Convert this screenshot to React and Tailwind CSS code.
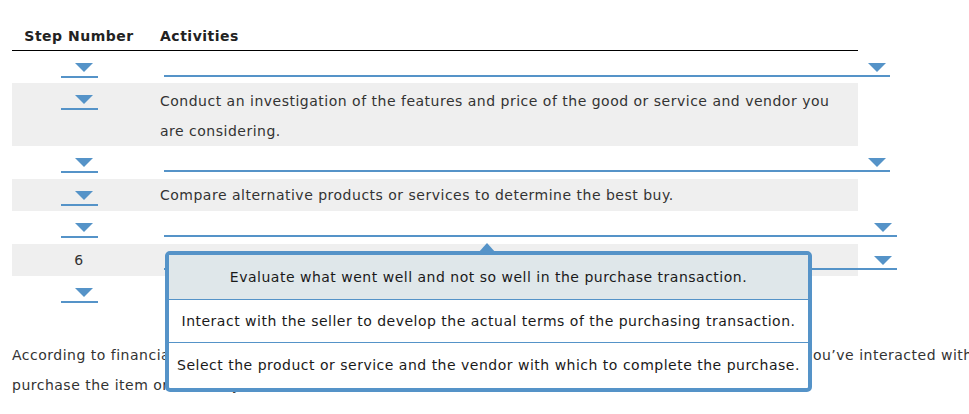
import React from 'react'

const BLUE = 'border-[#5593c8]'

function Caret({ className = '' }) {
  return (
    <svg width="18" height="9" viewBox="0 0 18 9" className={className}>
      <path d="M0 0 H18 L9 9 Z" fill="#5593c8" />
    </svg>
  )
}

// ── step number dropdown (narrow, centred in the first column) ──
function StepSelect() {
  return (
    <div className={`mt-[12px] h-[15px] w-[37px] border-b-2 ${BLUE} flex justify-end pr-[5px]`}>
      <Caret />
    </div>
  )
}

// ── activity dropdown (wide, runs past the table edge) ──
function ActivitySelect({ width = 'w-[726px]', pr = 'pr-[4px]' }) {
  return (
    <div className={`mt-[12px] ml-[4px] h-[14px] ${width} border-b-2 ${BLUE} flex justify-end ${pr} shrink-0`}>
      <Caret />
    </div>
  )
}

function Row({ gray, height, step, children }) {
  return (
    <div className={`flex ${height} ${gray ? 'bg-[#efefef]' : ''}`}>
      <div className="w-[134px] shrink-0 flex justify-center">{step}</div>
      <div className="flex-1 pl-[14px] flex items-start">{children}</div>
    </div>
  )
}

export default function App() {
  return (
    <div className="relative w-[969px] h-[414px] overflow-hidden bg-white text-[14px] tracking-[0.5px] text-[#333] font-['DejaVu_Sans','Verdana',sans-serif]">
      <div className="pl-3 pt-[22px]">
        <div className="w-[846px]">
          {/* header */}
          <div className="flex h-[29px] border-b border-black items-center font-bold text-[#222]">
            <div className="w-[134px] text-center">Step Number</div>
            <div className="pl-[14px]">Activities</div>
          </div>

          <Row height="h-[32px]" step={<StepSelect />}>
            <ActivitySelect />
          </Row>

          <Row gray height="h-[63px]" step={<StepSelect />}>
            <p className="pt-[3px] leading-[30px]">
              Conduct an investigation of the features and price of the good or service and vendor you
              <br />
              are considering.
            </p>
          </Row>

          <Row height="h-[33px]" step={<StepSelect />}>
            <ActivitySelect />
          </Row>

          <Row gray height="h-[32px]" step={<StepSelect />}>
            <p className="leading-[32px]">Compare alternative products or services to determine the best buy.</p>
          </Row>

          <Row height="h-[33px]" step={<StepSelect />}>
            <ActivitySelect width="w-[733px]" pr="pr-[5px]" />
          </Row>

          <Row gray height="h-[32px]" step={<div className="leading-[32px]">6</div>}>
            <ActivitySelect width="w-[733px]" pr="pr-[5px]" />
          </Row>

          <Row height="h-[33px]" step={<StepSelect />} />
        </div>

        {/* paragraph, partly hidden behind the open list */}
        <p className="mt-[31px] leading-[30px] whitespace-nowrap">
          According to financial advisers, it is wise to pause and think things over carefully for a day or three after you’ve interacted with the seller
          <br />
          purchase the item or service you have chosen.
        </p>
      </div>

      {/* ── open dropdown list ── */}
      <div className="absolute left-[165px] top-[251px] w-[647px] h-[141px]">
        <svg width="18" height="10" viewBox="0 0 18 10" className="absolute left-[313px] -top-[8px]">
          <path d="M0 10 L9 0 L18 10 Z" fill="#5593c8" />
        </svg>
        <div className="h-full border-4 border-[#5593c8] rounded-[5px] bg-white text-[#1a1a1a] flex flex-col overflow-hidden">
          <div className="h-[45px] bg-[#dfe7ea] flex items-center justify-center border-b border-[#5593c8]">
            Evaluate what went well and not so well in the purchase transaction.
          </div>
          <div className="h-[43px] flex items-center justify-center border-b border-[#5593c8]">
            Interact with the seller to develop the actual terms of the purchasing transaction.
          </div>
          <div className="flex-1 flex items-center justify-center">
            Select the product or service and the vendor with which to complete the purchase.
          </div>
        </div>
      </div>
    </div>
  )
}
